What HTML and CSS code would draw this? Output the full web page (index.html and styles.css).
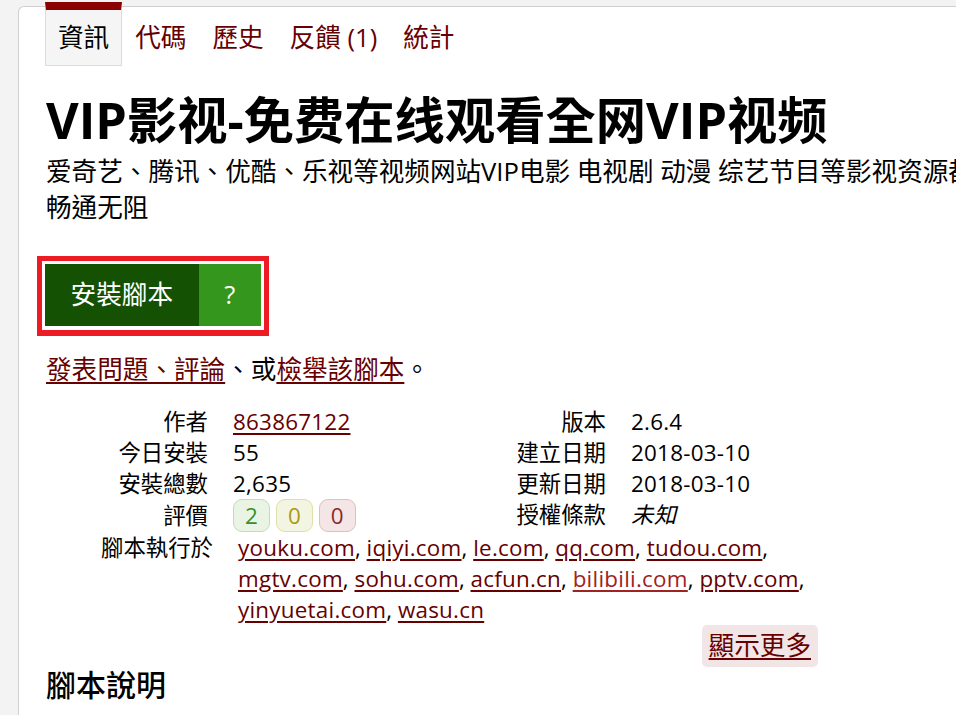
FILE: index.html
```html
<!DOCTYPE html>
<html lang="zh-Hant">
<head>
<meta charset="utf-8">
<title>VIP影视-免费在线观看全网VIP视频</title>
<link rel="stylesheet" href="styles.css">
</head>
<body>
<div class="card">
  <ul class="tabs">
    <li class="tab active"><span>資訊</span></li>
    <li class="tab"><a href="#">代碼</a></li>
    <li class="tab"><a href="#">歷史</a></li>
    <li class="tab"><a href="#">反饋 (1)</a></li>
    <li class="tab"><a href="#">統計</a></li>
  </ul>

  <header class="script-header">
    <h2 class="title">VIP影视-免费在线观看全网VIP视频</h2>
    <p class="desc">爱奇艺、腾讯、优酷、乐视等视频网站VIP电影 电视剧 动漫 综艺节目等影视资源都可免费观看，<br>畅通无阻</p>
  </header>

  <div class="highlight">
    <div class="install-area">
      <a class="install-link" href="#">安裝腳本</a><a class="install-help" href="#">?</a>
    </div>
  </div>

  <p class="feedback"><a href="#">發表問題、評論</a>、或<a href="#">檢舉該腳本</a>。</p>

  <dl class="stats">
    <dt>作者</dt><dd><a href="#">863867122</a></dd>
    <dt>版本</dt><dd>2.6.4</dd>
    <dt>今日安裝</dt><dd>55</dd>
    <dt>建立日期</dt><dd>2018-03-10</dd>
    <dt>安裝總數</dt><dd>2,635</dd>
    <dt>更新日期</dt><dd>2018-03-10</dd>
    <dt>評價</dt><dd><span class="pill good">2</span> <span class="pill ok">0</span> <span class="pill bad">0</span></dd>
    <dt>授權條款</dt><dd><em>未知</em></dd>
  </dl>

  <dl class="applies">
    <dt>腳本執行於</dt>
    <dd><a href="#">youku.com</a>, <a href="#">iqiyi.com</a>, <a href="#">le.com</a>, <a href="#">qq.com</a>, <a href="#">tudou.com</a>, <a href="#">mgtv.com</a>, <a href="#">sohu.com</a>, <a href="#">acfun.cn</a>, <a class="visited" href="#">bilibili.com</a>, <a href="#">pptv.com</a>, <a href="#">yinyuetai.com</a>, <a href="#">wasu.cn</a></dd>
  </dl>

  <div class="more-row"><a class="show-more" href="#">顯示更多</a></div>

  <h3 class="section-title">腳本說明</h3>
</div>
</body>
</html>
```

FILE: styles.css
```css
html, body {
  margin: 0;
  overflow: hidden;
}

body {
  background: #f3f3f3;
  padding: 6px 0 0 18px;
  font-family: "Open Sans", "Noto Sans CJK TC", "Noto Sans CJK SC", sans-serif;
  font-size: 25.6px;
  line-height: 1.4;
  color: #000;
}

a {
  color: #670000;
  text-decoration-thickness: 2px;
  text-underline-offset: 3px;
}

.card {
  width: 1100px;
  min-height: 760px;
  background: #fff;
  border: 1px solid #cfcfcf;
  border-right: none;
  border-radius: 6px 0 0 0;
  padding: 0 0 0 27px;
}

/* tabs */
.tabs {
  list-style: none;
  margin: -5px 0 0 -1px;
  padding: 0;
  display: flex;
}

.tab {
  border: 1px solid transparent;
  border-top: 8px solid transparent;
  padding: 0 12px;
  line-height: 55px;
  font-size: 25.6px;
}

.tab a {
  text-decoration: none;
}

.tab.active {
  border-color: #dcdcdc;
  border-top-color: #8b0000;
  background: #f5f5f5;
}

/* header */
.title {
  margin: 25px 0 0;
  font-size: 50.3px;
  line-height: 1.15;
  font-weight: 700;
}

.desc {
  margin: 5px 0 0;
  white-space: nowrap;
}

/* install */
.highlight {
  width: fit-content;
  margin: 31px 0 0 -9px;
  border: 5px solid #ed1c24;
  border-bottom-width: 6px;
  padding: 3px 3px 4px;
}

.install-area {
  display: flex;
}

.install-link,
.install-help {
  display: block;
  color: #fff;
  text-decoration: none;
  padding: 12.8px 25.6px;
}

.install-link {
  background: #145103;
}

.install-help {
  background: #34961c;
}

.feedback {
  margin: 16px 0 0;
}

/* stats */
.stats {
  margin: 18px 0 0;
  display: grid;
  grid-template-columns: 162px 186px 162px auto;
  grid-auto-rows: 31px;
  column-gap: 25px;
  align-items: center;
  font-size: 22.4px;
  line-height: 1.4;
}

.stats dt,
.applies dt {
  text-align: right;
}

.stats dd,
.applies dd {
  margin: 0;
}

.stats dd,
.applies dd a {
  letter-spacing: 0.25px;
}

.pill {
  display: inline-block;
  padding: 0 11px;
  border: 1px solid;
  border-radius: 9px;
  letter-spacing: 0;
}

.stats dt:nth-of-type(7),
.stats dd:nth-of-type(7) {
  margin-top: 2px;
}

.pill.good {
  background: #e9f4e5;
  border-color: #bfdfb3;
  color: #3b8f2b;
}

.pill.ok {
  background: #f4f4e3;
  border-color: #dfdfa9;
  color: #a89a12;
}

.pill.bad {
  background: #f4e6e6;
  border-color: #e3bcbc;
  color: #8a2a2a;
}

.applies {
  margin: 2px 0 0;
  display: grid;
  grid-template-columns: 167px 610px;
  column-gap: 25px;
  font-size: 22.4px;
  line-height: 31px;
}

.applies a.visited {
  color: #a02323;
}

.more-row {
  width: 772px;
  text-align: right;
}

.show-more {
  display: inline-block;
  background: #f2e5e5;
  border-radius: 5px;
  padding: 3px 7px;
}

.section-title {
  margin: 0;
  font-size: 30px;
  line-height: 1.2;
  font-weight: 500;
}
```
